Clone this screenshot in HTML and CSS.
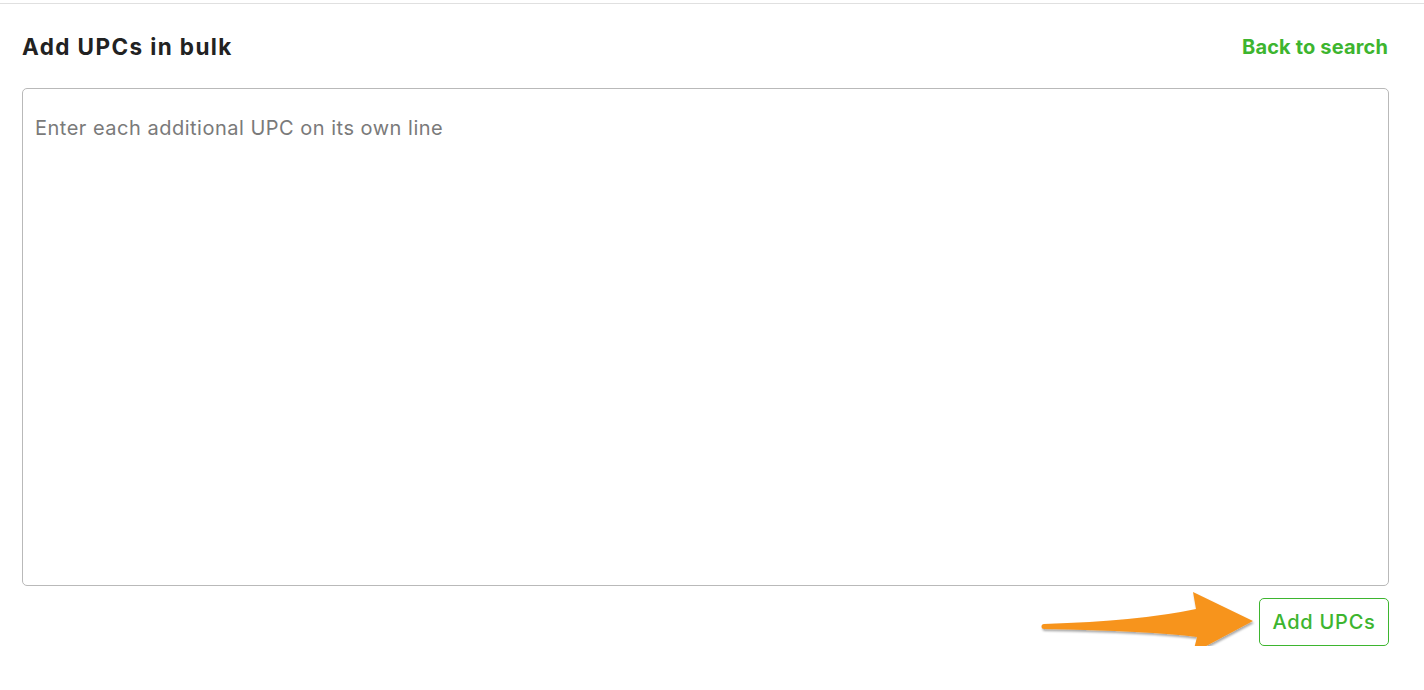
FILE: index.html
```html
<!DOCTYPE html>
<html lang="en">
<head>
<meta charset="utf-8">
<title>Add UPCs in bulk</title>
<link rel="stylesheet" href="styles.css">
</head>
<body>
<div class="page">
  <section class="panel">
    <header class="panel-header">
      <h2 class="title">Add UPCs in bulk</h2>
      <a class="back-link" href="#">Back to search</a>
    </header>
    <textarea class="upc-input" placeholder="Enter each additional UPC on its own line"></textarea>
    <div class="actions">
      <svg class="arrow" width="216" height="66" viewBox="0 0 216 66" aria-hidden="true">
        <defs>
          <filter id="sh" x="-10%" y="-20%" width="120%" height="150%">
            <feDropShadow dx="1" dy="2" stdDeviation="1.2" flood-color="#000" flood-opacity="0.35"/>
          </filter>
        </defs>
        <path filter="url(#sh)" fill="#f7941d" d="M4,34 Q100,31 156,19 L153,2 L213,31 L153,63 L157,47 Q110,41 4,39 A2.5,2.5 0 0 1 4,34 Z"/>
      </svg>
      <button class="btn-add" type="button">Add UPCs</button>
    </div>
  </section>
</div>
</body>
</html>
```

FILE: styles.css
```css
html, body {
  margin: 0;
  padding: 0;
  background: #ffffff;
}

body {
  font-family: Inter, "Noto Sans", "Liberation Sans", sans-serif;
  color: #222222;
}

.page {
  padding-top: 3px;
}

.panel {
  border-top: 1px solid #e0e0e0;
  padding: 0 35px 0 22px;
}

.panel-header {
  display: flex;
  justify-content: space-between;
  align-items: center;
  height: 32px;
  padding: 27px 1px 25px 0;
}

.title {
  margin: 0;
  font-size: 22.5px;
  font-weight: 700;
  line-height: 32px;
  letter-spacing: 1.4px;
  color: #222222;
}

.back-link {
  font-size: 20px;
  font-weight: 700;
  line-height: 32px;
  letter-spacing: 0.15px;
  color: #3db52f;
  text-decoration: none;
}

.upc-input {
  display: block;
  box-sizing: border-box;
  width: 100%;
  height: 498px;
  margin: 0;
  padding: 26px 12px;
  border: 1px solid #b9b9b9;
  border-radius: 5px;
  resize: none;
  font-family: Inter, "Noto Sans", "Liberation Sans", sans-serif;
  font-size: 20px;
  line-height: 26px;
  letter-spacing: 0.5px;
  color: #222222;
  outline: none;
}

.upc-input::placeholder {
  color: #7a7a7a;
}

.actions {
  position: relative;
  display: flex;
  justify-content: flex-end;
  margin-top: 12px;
}

.arrow {
  position: absolute;
  right: 133px;
  top: -8px;
}

.btn-add {
  box-sizing: border-box;
  width: 130px;
  height: 48px;
  padding: 0;
  border: 1px solid #3db52f;
  border-radius: 5px;
  background: #ffffff;
  font-family: Inter, "Noto Sans", "Liberation Sans", sans-serif;
  font-size: 20px;
  font-weight: 500;
  letter-spacing: 0.75px;
  color: #3db52f;
  cursor: pointer;
}
```
